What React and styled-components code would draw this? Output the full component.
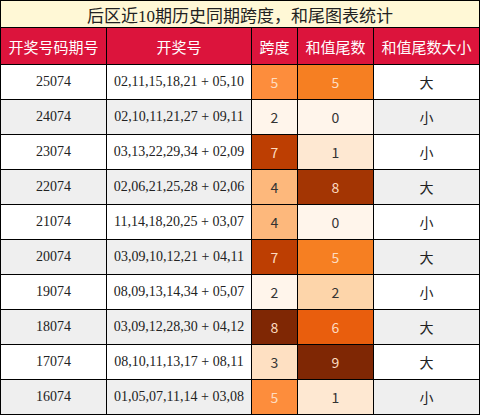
import React from "react";
import styled, { createGlobalStyle } from "styled-components";

const GlobalStyle = createGlobalStyle`
  body {
    margin: 0;
    background: #fff;
  }
`;

const rows = [
  { period: "25074", draw: "02,11,15,18,21 + 05,10", span: 5, tail: 5, size: "大" },
  { period: "24074", draw: "02,10,11,21,27 + 09,11", span: 2, tail: 0, size: "小" },
  { period: "23074", draw: "03,13,22,29,34 + 02,09", span: 7, tail: 1, size: "小" },
  { period: "22074", draw: "02,06,21,25,28 + 02,06", span: 4, tail: 8, size: "大" },
  { period: "21074", draw: "11,14,18,20,25 + 03,07", span: 4, tail: 0, size: "小" },
  { period: "20074", draw: "03,09,10,12,21 + 04,11", span: 7, tail: 5, size: "大" },
  { period: "19074", draw: "08,09,13,14,34 + 05,07", span: 2, tail: 2, size: "小" },
  { period: "18074", draw: "03,09,12,28,30 + 04,12", span: 8, tail: 6, size: "大" },
  { period: "17074", draw: "08,10,11,13,17 + 08,11", span: 3, tail: 9, size: "大" },
  { period: "16074", draw: "01,05,07,11,14 + 03,08", span: 5, tail: 1, size: "小" },
];

// 跨度 / 和值尾数 heat colours
const spanColors = {
  2: "#fff5eb",
  3: "#fee0c2",
  4: "#fdb87c",
  5: "#fd8d3c",
  7: "#bd3e02",
  8: "#7f2704",
};
const tailColors = {
  0: "#fff5eb",
  1: "#fee8d2",
  2: "#fdd5aa",
  5: "#f67f22",
  6: "#e95e0d",
  8: "#a33503",
  9: "#7f2704",
};
const darkSpan = [5, 7, 8];
const darkTail = [5, 6, 8, 9];

const Table = styled.div`
  width: 480px;
  border-top: 1px solid #000;
  border-left: 1px solid #000;
  box-sizing: border-box;
  font-family: "Liberation Serif", "Noto Sans CJK SC", serif;
`;

const Title = styled.div`
  height: 26px;
  border-right: 1px solid #000;
  border-bottom: 1px solid #000;
  background: #fff8d6;
  color: #222;
  font-size: 17px;
  display: flex;
  align-items: center;
  justify-content: center;
`;

const Row = styled.div`
  display: grid;
  grid-template-columns: 106px 145px 46px 76px 106px;
  height: ${(p) => p.$h}px;
  background: ${(p) => (p.$alt ? "#efefef" : "#fff")};
`;

const Cell = styled.div`
  border-right: 1px solid #000;
  border-bottom: 1px solid #000;
  display: flex;
  align-items: center;
  justify-content: center;
  font-size: 14px;
  color: #222;
  white-space: nowrap;
`;

const HeadCell = styled(Cell)`
  background: #dc143c;
  color: #fff;
  font-size: 15px;
  font-family: "Noto Sans CJK SC", sans-serif;
`;

const HeatCell = styled(Cell)`
  background: ${(p) => p.$bg};
  color: ${(p) => (p.$dark ? "#fddcc0" : "#333")};
  font-family: "Noto Sans CJK SC", sans-serif;
`;

const SizeCell = styled(Cell)`
  font-family: "Noto Sans CJK SC", sans-serif;
  color: #222;
`;

export default function App() {
  return (
    <>
      <GlobalStyle />
      <Table>
        <Title>后区近10期历史同期跨度，和尾图表统计</Title>
        <Row $h={37}>
          <HeadCell>开奖号码期号</HeadCell>
          <HeadCell>开奖号</HeadCell>
          <HeadCell>跨度</HeadCell>
          <HeadCell>和值尾数</HeadCell>
          <HeadCell>和值尾数大小</HeadCell>
        </Row>
        {rows.map((r, i) => (
          <Row key={r.period} $h={35} $alt={i % 2 === 1}>
            <Cell>{r.period}</Cell>
            <Cell>{r.draw}</Cell>
            <HeatCell $bg={spanColors[r.span]} $dark={darkSpan.includes(r.span)}>
              {r.span}
            </HeatCell>
            <HeatCell $bg={tailColors[r.tail]} $dark={darkTail.includes(r.tail)}>
              {r.tail}
            </HeatCell>
            <SizeCell>{r.size}</SizeCell>
          </Row>
        ))}
      </Table>
    </>
  );
}
